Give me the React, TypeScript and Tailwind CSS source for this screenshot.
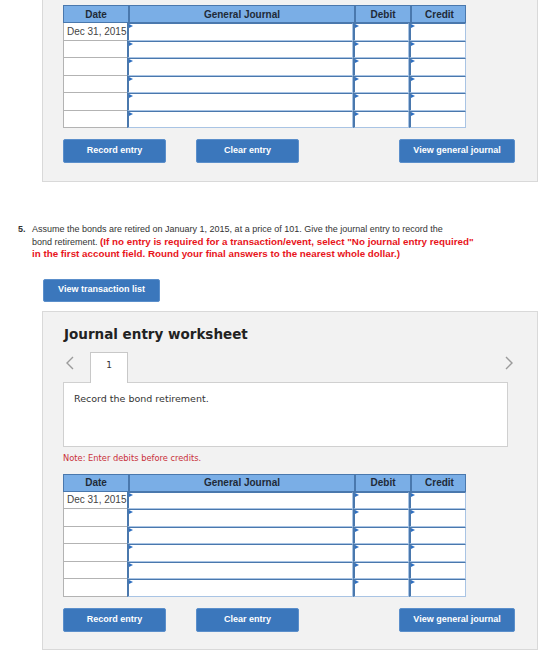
import React from "react";

const arial = "font-['Liberation_Sans',Arial,sans-serif]";
const verdana = "font-['DejaVu_Sans',Verdana,sans-serif]";

const ROWS = 6;

function EntryInput() {
  return (
    <div className="relative h-full border-t border-l-2 border-r border-b border-t-[#4a78ad] border-l-[#4a78ad] border-r-[#a9c4e4] border-b-[#a9c4e4] bg-white">
      {/* dropdown flag in the corner */}
      <span className="absolute left-0 top-0 h-0 w-0 border-y-[2.5px] border-l-[4px] border-y-transparent border-l-[#2f6fc0]" />
    </div>
  );
}

function JournalTable() {
  return (
    <div className={`${arial} w-[403px]`}>
      <div className="grid h-[18px] grid-cols-[64px_226px_56px_57px] border border-[#4a78ad] bg-[#7aaee6] text-[10px] font-bold text-[#1f2a38]">
        <div className="flex items-center justify-center">Date</div>
        <div className="flex items-center justify-center border-l-2 border-[#4a78ad]">General Journal</div>
        <div className="flex items-center justify-center border-l-2 border-[#4a78ad]">Debit</div>
        <div className="flex items-center justify-center border-l-2 border-[#4a78ad]">Credit</div>
      </div>
      {Array.from({ length: ROWS }).map((_, i) => (
        <div key={i} className="grid h-[17.5px] grid-cols-[64px_226px_56px_57px]">
          <div className="flex items-center border-b border-l border-[#b3b3b3] bg-white pl-[3px] text-[10px] text-[#444]">
            {i === 0 ? "Dec 31, 2015" : ""}
          </div>
          <EntryInput />
          <EntryInput />
          <EntryInput />
        </div>
      ))}
    </div>
  );
}

function Btn({ label, className }: { label: string; className: string }) {
  return (
    <button
      className={`${arial} ${className} h-[24px] rounded-[2px] border border-[#5b8fcb] bg-[#3b77bc] text-[9px] font-bold text-white`}
    >
      {label}
    </button>
  );
}

function EntryButtons() {
  return (
    <div className="flex w-[452px] items-start gap-[30px]">
      <Btn label="Record entry" className="w-[103px]" />
      <Btn label="Clear entry" className="w-[103px]" />
      <Btn label="View general journal" className="ml-auto w-[116px]" />
    </div>
  );
}

function Chevron({ dir }: { dir: "left" | "right" }) {
  return (
    <svg width="8" height="14" viewBox="0 0 8 14" fill="none">
      <polyline
        points={dir === "left" ? "7,1 1,7 7,13" : "1,1 7,7 1,13"}
        stroke="#9b9b9b"
        strokeWidth="1.4"
      />
    </svg>
  );
}

export default function App() {
  return (
    <div className="min-h-[656px] w-[560px] bg-white">
      {/* previous requirement's journal (scrolled partly out of view) */}
      <div className="ml-[42px] w-[496px] border-x border-b border-[#d9d9d9] bg-[#f2f2f2] pb-[18px] pl-[20px] pt-[5px]">
        <JournalTable />
        <div className="mt-[11px]">
          <EntryButtons />
        </div>
      </div>

      <div className={`${arial} ml-[18px] mt-[42px] flex text-[9px] leading-[11.5px] text-[#333]`}>
        <span className="w-[14px] font-bold">5.</span>
        <p>
          Assume the bonds are retired on January 1, 2015, at a price of 101. Give the journal entry to record the
          <br />
          bond retirement.{" "}
          <span className="text-[9.8px] font-bold text-[#e8141b]">
            (If no entry is required for a transaction/event, select "No journal entry required"
            <br />
            in the first account field. Round your final answers to the nearest whole dollar.)
          </span>
        </p>
      </div>

      <button
        className={`${arial} ml-[43px] mt-[18px] h-[23px] w-[117px] rounded-[2px] border border-[#5b8fcb] bg-[#3b77bc] text-[9px] font-bold text-white`}
      >
        View transaction list
      </button>

      <div className="ml-[42px] mt-[9px] w-[496px] border border-[#d9d9d9] bg-[#f2f2f2] pb-[17px] pl-[20px] pt-[13px]">
        <h2 className={`${verdana} pl-px text-[13.5px] font-bold leading-[18px] text-[#222]`}>
          Journal entry worksheet
        </h2>

        <div className="mt-[9px] flex w-[450px] items-center">
          <div className="flex w-[27px] items-center pb-[8px] pl-[3px]">
            <Chevron dir="left" />
          </div>
          <div
            className={`${verdana} relative z-[1] -mb-px flex h-[31px] w-[38px] justify-center border-x border-t border-[#c8c8c8] bg-white pt-[6px] text-[9px] text-[#333]`}
          >
            1
          </div>
          <div className="ml-auto pb-[8px]">
            <Chevron dir="right" />
          </div>
        </div>

        <div className="h-[65px] w-[445px] border border-[#d0d0d0] bg-white pl-[10px] pt-[10px]">
          <p className={`${verdana} text-[9.5px] leading-[12px] text-[#333]`}>Record the bond retirement.</p>
        </div>

        <p className={`${verdana} mt-[5px] text-[8.3px] leading-[12px] text-[#c9313a]`}>
          Note: Enter debits before credits.
        </p>

        <div className="mt-[10px]">
          <JournalTable />
        </div>
        <div className="mt-[11px]">
          <EntryButtons />
        </div>
      </div>
    </div>
  );
}
